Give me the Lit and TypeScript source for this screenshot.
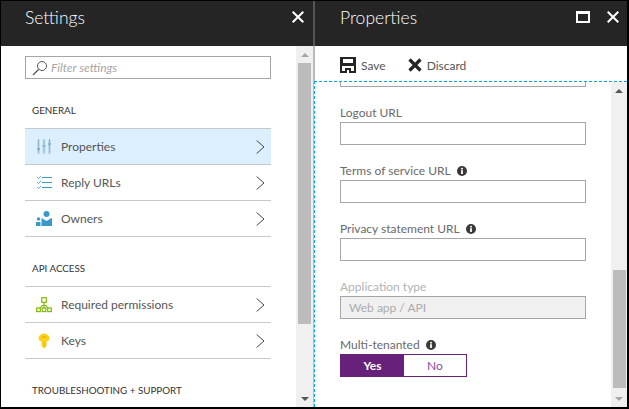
import { LitElement, html, css, svg } from 'lit';
import { customElement } from 'lit/decorators.js';

const chevron = html`<svg class="chev" width="9" height="14" viewBox="0 0 9 14"><path d="M.6.5 8 7 .6 13.500" fill="none" stroke="#444" stroke-width="1"/></svg>`;

const closeIcon = html`<svg width="12" height="12" viewBox="0 0 12 12"><path d="M.7.7 11.300 11.300M11.300.7.7 11.300" stroke="#fff" stroke-width="2"/></svg>`;

const infoIcon = html`<svg class="info" width="10" height="10" viewBox="0 0 10 10"><circle cx="5" cy="5" r="5" fill="#3a3a3a"/><rect x="4.100" y="4.200" width="1.800" height="3.800" fill="#fff"/><rect x="4.100" y="1.900" width="1.800" height="1.600" fill="#fff"/></svg>`;

const icons: Record<string, unknown> = {
  sliders: svg`<g fill="#c3deef"><rect x="1" y="1" width="3" height="14"/><rect x="6.500" y="1" width="3" height="14"/><rect x="12" y="1" width="3" height="14"/></g>
    <g fill="#8fb4ca"><rect x="2" y="0" width="1" height="14"/><rect x="7.500" y="0" width="1" height="14"/><rect x="13" y="0" width="1" height="14"/>
    <rect x="1" y="9" width="3" height="2"/><rect x="6.500" y="6" width="3" height="2"/><rect x="12" y="4" width="3" height="2"/></g>`,
  list: svg`<g stroke="#3999c6" stroke-width="1" fill="none"><path d="M6 2.500h10M6 7.500h10M6 12.500h10"/></g>
    <g stroke="#59b4d9" stroke-width="1" fill="none"><path d="M1 2l1.500 1.500L5 1M1 7l1.500 1.500L5 6M1 12l1.500 1.500L5 11"/></g>`,
  owners: svg`<circle cx="10.500" cy="3" r="3" fill="#3999c6"/><path d="M5.500 7l5 3 5-3h.5v8H5.500z" fill="#3999c6"/>
    <circle cx="2.500" cy="8" r="1.700" fill="#3999c6"/><path d="M0 11h4.500v4H0z" fill="#3999c6"/>`,
  network: svg`<g fill="none" stroke="#7fba00" stroke-width="1.200"><rect x="5.700" y=".7" width="4.600" height="4.600"/><rect x=".7" y="11" width="3.600" height="3.600"/><rect x="6.200" y="11" width="3.600" height="3.600"/><rect x="11.700" y="11" width="3.600" height="3.600"/><path d="M8 5.300V11M4 11.500 6 8.500h4l2 3"/></g>`,
  key: svg`<path d="M5 1.500Q8 -.5 11 1.500 13.500 3 13.500 5 13.500 7.500 10.500 8.500V13L8 15.500 5.500 13V8.500Q2.500 7.500 2.500 5 2.500 3 5 1.500z" fill="#fcd116"/><rect x="5.500" y="3.500" width="5" height="1" fill="#e8a800"/><rect x="8" y="9" width="1" height="5" fill="#eeb400"/>`,
};

const menuItem = (icon: string, label: string, active = false) => html`
  <div class="item ${active ? 'active' : ''}">
    <svg class="ico" width="16" height="16" viewBox="0 0 16 16">${icons[icon]}</svg>
    <span>${label}</span>
    ${chevron}
  </div>
`;

const scrollbar = (thumbTop: number, thumbHeight: number) => html`
  <div class="sb">
    <i class="arrow up"></i>
    <div class="track"><div class="thumb" style="margin-top:${thumbTop}px;height:${thumbHeight}px"></div></div>
    <i class="arrow down"></i>
  </div>
`;

const field = (label: string, info = false) => html`
  <label class="lbl">${label}${info ? infoIcon : ''}</label>
  <div class="input"></div>
`;

@customElement('app-root')
export class AppRoot extends LitElement {
  static styles = css`
    :host {
      display: block;
      width: 629px;
      height: 409px;
      box-sizing: border-box;
      background: #fff;
      border: solid #000;
      border-width: 1px 2px 2px 1px;
      font-family: 'Lato', 'Open Sans', sans-serif;
      font-size: 12px;
      color: #555;
    }
    * { box-sizing: border-box; }
    .wrap { display: flex; height: 100%; }
    .pane { display: flex; flex-direction: column; min-width: 0; }
    .left { width: 312px; }
    .divider { width: 2px; background: #bbb; flex: none; }
    .divider::before { content: ''; display: block; height: 45px; background: #555; }
    .right { flex: 1; }
    .head {
      height: 45px;
      flex: none;
      background: #252525;
      color: #fff;
      display: flex;
      align-items: center;
      font-size: 17.500px;
      font-weight: 300;
      padding-bottom: 13px;
    }
    .left .head { padding-left: 24px; padding-right: 9px; }
    .right .head { padding-left: 25px; padding-right: 8px; gap: 17px; }
    .head .title { flex: 1; }
    .max { width: 14px; height: 12px; border: 2px solid #fff; border-top-width: 3px; }
    .body { flex: 1; display: flex; min-height: 0; }
    .list { flex: 1; padding: 10px 25px 0 24px; overflow: hidden; }
    .filter {
      height: 23px;
      border: 1px solid #a6a6a6;
      display: flex;
      align-items: center;
      gap: 3px;
      padding-left: 6px;
      font-size: 12px;
      font-style: italic;
      color: #a6a6a6;
    }
    .group {
      font-size: 9.800px;
      color: #333;
      height: 49px;
      padding-top: 13px;
      display: flex;
      align-items: center;
      padding-left: 7px;
    }
    .items { border-top: 1px solid #c9c9c9; }
    .item {
      height: 36px;
      border-bottom: 1px solid #c9c9c9;
      display: flex;
      align-items: center;
      gap: 9px;
      padding: 0 6px 0 11px;
    }
    .item span { flex: 1; }
    .item.active { background: #dcefff; }
    .sb { width: 17px; flex: none; background: #f0f0f0; display: flex; flex-direction: column; align-items: center; }
    .right .sb { width: 16px; }
    .track { flex: 1; width: 13px; }
    .thumb { background: #bcbcbc; width: 13px; }
    .arrow { flex: none; height: 17px; width: 100%; display: flex; align-items: center; justify-content: center; }
    .arrow::before { content: ''; border: 4px solid transparent; }
    .arrow.up::before { border-bottom: 4px solid #a6a6a6; border-top: 0; }
    .arrow.down::before { border-top: 4px solid #555; border-bottom: 0; }
    .right .arrow.up::before { border-bottom-color: #555; }
    .right .arrow.down::before { border-top-color: #a6a6a6; }
    .bar {
      height: 35px;
      flex: none;
      display: flex;
      align-items: center;
      padding: 3px 0 0 25px;
      gap: 5px;
    }
    .bar .gap { width: 12px; }
    .content { flex: 1; display: flex; min-height: 0; margin-left: -1px; border: 1px dashed #00a8e8; border-width: 1px 0 0 1px; background: #fff; }
    .form { flex: 1; overflow: hidden; padding-left: 25px; padding-right: 25px; }
    .form-inner { margin-top: -18px; }
    .lbl {
      display: flex;
      align-items: center;
      gap: 6px;
      height: 19px;
      margin-top: 16px;
      color: #6a6a6a;
    }
    .input { height: 23px; border: 1px solid #a6a6a6; background: #fff; }
    .lbl.disabled { color: #b3b3b3; }
    .input.disabled { background: #f0f0f0; color: #ababab; display: flex; align-items: center; padding-left: 8px; }
    .toggle { display: flex; width: 127px; height: 23px; border: 1px solid #68217a; }
    .toggle div { flex: 1; display: flex; align-items: center; justify-content: center; color: #8d4a9e; }
    .toggle .on { background: #68217a; color: #fff; font-weight: 700; flex: none; width: 63px; }
  `;

  render() {
    return html`
      <div class="wrap">
        <section class="pane left">
          <div class="head"><span class="title">Settings</span>${closeIcon}</div>
          <div class="body">
            <div class="list">
              <div class="filter">
                <svg width="16" height="16" viewBox="0 0 16 16"><circle cx="10" cy="6" r="4.500" fill="none" stroke="#555"/><path d="M6.500 9.500 1 15" stroke="#555" stroke-width="1.200"/></svg>
                Filter settings
              </div>
              <div class="group">GENERAL</div>
              <div class="items">
                ${menuItem('sliders', 'Properties', true)}
                ${menuItem('list', 'Reply URLs')}
                ${menuItem('owners', 'Owners')}
              </div>
              <div class="group">API ACCESS</div>
              <div class="items">
                ${menuItem('network', 'Required permissions')}
                ${menuItem('key', 'Keys')}
              </div>
              <div class="group">TROUBLESHOOTING + SUPPORT</div>
            </div>
            ${scrollbar(0, 261)}
          </div>
        </section>
        <div class="divider"></div>
        <section class="pane right">
          <div class="head">
            <span class="title">Properties</span>
            <div class="max"></div>
            ${closeIcon}
          </div>
          <div class="bar">
            <svg width="16" height="16" viewBox="0 0 16 16"><path fill-rule="evenodd" d="M0 0h16v16H0zM3 2v4h10V2zM2 9v5h3v-3h6v3h3V9zM7 13v3h2v-3z" fill="#252525"/></svg>
            <span>Save</span>
            <span class="gap"></span>
            <svg width="14" height="14" viewBox="0 0 14 14"><path d="M1.500 1.500l11 11M12.500 1.500l-11 11" stroke="#252525" stroke-width="3.200"/></svg>
            <span>Discard</span>
          </div>
          <div class="content">
            <div class="form">
              <div class="form-inner">
                <div class="input"></div>
                ${field('Logout URL')}
                ${field('Terms of service URL', true)}
                ${field('Privacy statement URL', true)}
                <label class="lbl disabled">Application type</label>
                <div class="input disabled">Web app / API</div>
                <label class="lbl">Multi-tenanted${infoIcon}</label>
                <div class="toggle"><div class="on">Yes</div><div>No</div></div>
              </div>
            </div>
            ${scrollbar(171, 118)}
          </div>
        </section>
      </div>
    `;
  }
}
